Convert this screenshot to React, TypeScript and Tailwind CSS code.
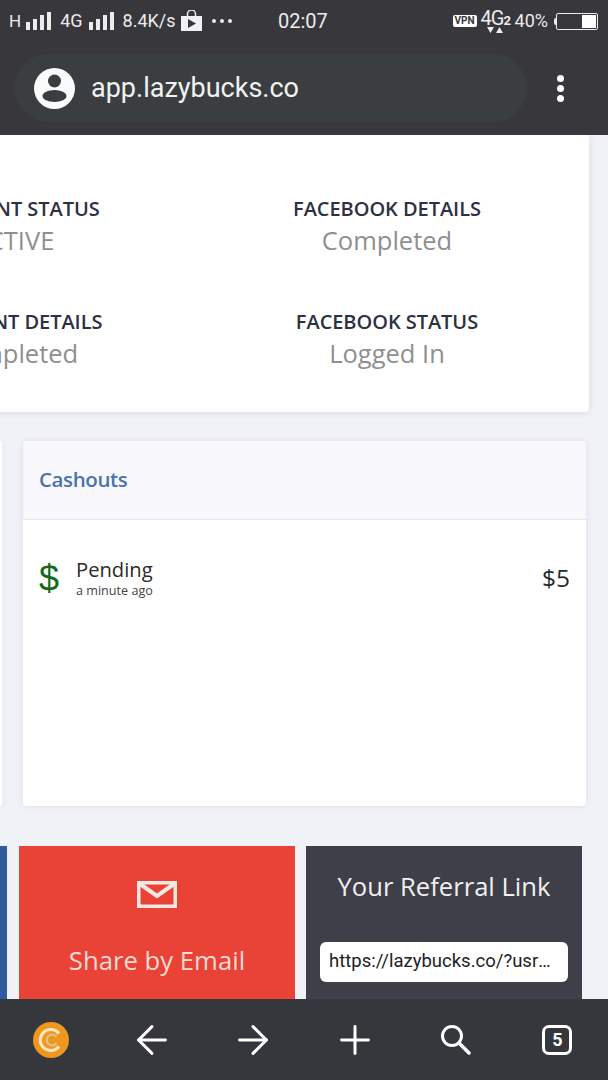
import React from 'react';
import { ArrowLeft, ArrowRight, Plus } from 'lucide-react';

const stats = [
  { label: 'ACCOUNT STATUS', value: 'ACTIVE' },
  { label: 'FACEBOOK DETAILS', value: 'Completed' },
  { label: 'ACCOUNT DETAILS', value: 'Completed' },
  { label: 'FACEBOOK STATUS', value: 'Logged In' },
];

const SignalBars = () => (
  <svg width="25" height="20" viewBox="0 0 25 20" fill="#ececec" className="shrink-0">
    <rect x="0" y="11" width="4" height="8" />
    <rect x="7" y="8" width="4" height="11" />
    <rect x="14" y="4" width="4" height="15" />
    <rect x="21" y="1" width="4" height="18" />
  </svg>
);

const StoreBag = () => (
  <svg width="21" height="22" viewBox="0 0 21 22" className="shrink-0">
    <path d="M6.5 6V4a4 4 0 0 1 8 0v2" fill="none" stroke="#ececec" strokeWidth="1.5" />
    <rect x="0" y="6" width="21" height="15" fill="#f2f2f2" />
    <path d="M7 9l8 4.5L7 18z" fill="#37373c" />
  </svg>
);

const StatusBar = () => (
  <div className="flex h-[42px] items-center pl-[9px] pr-[10px] text-[#ececec] font-['Roboto',sans-serif]">
    <div className="flex w-[269px] items-center">
      <span className="text-[17px] leading-none">H</span>
      <div className="ml-[5px]"><SignalBars /></div>
      <span className="ml-[9px] text-[18px] leading-none">4G</span>
      <div className="ml-[6px]"><SignalBars /></div>
      <span className="ml-[9px] text-[18px] leading-none">8.4K/s</span>
      <div className="ml-[5px]"><StoreBag /></div>
      <div className="ml-[10px] flex gap-[4px]">
        <span className="size-[4px] rounded-full bg-[#ececec]" />
        <span className="size-[4px] rounded-full bg-[#ececec]" />
        <span className="size-[4px] rounded-full bg-[#ececec]" />
      </div>
    </div>
    <span className="text-[20px] leading-none">02:07</span>
    <div className="ml-auto flex items-center">
      <span className="rounded-[2px] bg-white px-[2px] text-[10px] font-bold leading-[12px] text-[#37373c]">VPN</span>
      <div className="relative -mt-[6px] ml-[4px] w-[29px] leading-none">
        <span className="text-[20px] tracking-[-1px]">4G</span>
        <span className="text-[13px] font-bold">2</span>
        <svg width="16" height="7" viewBox="0 0 16 7" fill="#ececec" className="absolute left-[6px] top-[19px]">
          <path d="M0 0h7L3.5 6zM9 6l3.5-6L16 6z" />
        </svg>
      </div>
      <span className="ml-[5px] text-[18px] leading-none">40%</span>
      <div className="relative ml-[8px] flex h-[17px] w-[42px] justify-end rounded-[2px] border border-[#ececec] p-px">
        <span className="absolute -left-[3px] top-[4px] h-[7px] w-[2px] rounded-l-[2px] bg-[#ececec]" />
        <div className="w-[14px] bg-white" />
      </div>
    </div>
  </div>
);

const AddressBar = () => (
  <div className="flex h-[93px] items-start pl-[14px] pr-[39px] pt-[12px]">
    <div className="flex h-[68px] w-[513px] items-center rounded-full bg-[#3a3e41] pl-[20px]">
      <svg width="41" height="41" viewBox="0 0 41 41" className="shrink-0">
        <circle cx="20.5" cy="20.5" r="20.5" fill="#fbfbfb" />
        <circle cx="20.5" cy="13" r="6.5" fill="#3a3e41" />
        <ellipse cx="20.5" cy="28" rx="12" ry="6" fill="#3a3e41" />
      </svg>
      <span className="ml-[16px] font-['Roboto',sans-serif] text-[27px] leading-none text-[#f2f2f2]">app.lazybucks.co</span>
    </div>
    <div className="ml-[30px] mt-[21px] flex flex-col gap-[3px]">
      <span className="size-[7px] rounded-full bg-white" />
      <span className="size-[7px] rounded-full bg-white" />
      <span className="size-[7px] rounded-full bg-white" />
    </div>
  </div>
);

const StatsCard = () => (
  <div className="-ml-[189px] h-[277px] w-[778px] rounded-b-[4px] bg-white px-[15px] pt-[61px] shadow-[0_1px_6px_rgba(60,60,90,0.12)]">
    <div className="grid grid-cols-2 gap-y-[53px]">
      {stats.map((s) => (
        <div key={s.label} className="flex flex-col items-center">
          <span className="text-[20px] font-semibold leading-[26px] tracking-[-0.05px] text-[#2d3142]">{s.label}</span>
          <span className="mt-[2px] text-[25.5px] leading-[32px] text-[#8f8f8f]">{s.value}</span>
        </div>
      ))}
    </div>
  </div>
);

const CashoutsRow = () => (
  <div className="mt-[29px] flex h-[365px]">
    <div className="w-[2px] shrink-0 rounded-r-[4px] bg-white shadow-[0_0_6px_rgba(60,60,90,0.12)]" />
    <div className="ml-[21px] flex w-[563px] flex-col rounded-[4px] bg-white shadow-[0_0_6px_rgba(60,60,90,0.1)]">
      <div className="flex h-[79px] items-center rounded-t-[4px] border-b border-[#e6e7ec] bg-[#f8f8fc] pb-[2px] pl-[16px]">
        <span className="text-[20.5px] font-semibold tracking-[-0.4px] text-[#4b71b0]">Cashouts</span>
      </div>
      <div className="flex items-start px-[16px] pt-[36px]">
        <span className="mt-[1px] w-[37px] font-['Liberation_Sans',sans-serif] text-[36px] leading-[44px] text-[#14691b]">$</span>
        <div className="flex flex-col">
          <span className="text-[20.2px] leading-[26px] text-[#2a2a2a]">Pending</span>
          <span className="mt-[1px] text-[12.6px] leading-[16px] text-[#444]">a minute ago</span>
        </div>
        <span className="ml-auto mt-[6px] text-[24.5px] leading-[32px] text-[#2a2a2a]">$5</span>
      </div>
    </div>
  </div>
);

const ShareRow = () => (
  <div className="mt-[40px] flex h-[160px]">
    <div className="w-[7px] shrink-0 bg-[#2f5aa0]" />
    <div className="ml-[12px] flex w-[276px] flex-col items-center bg-[#e84336] pt-[35px]">
      <svg width="40" height="27" viewBox="0 0 40 27" className="shrink-0">
        <rect x="1.75" y="1.75" width="36.5" height="23.5" fill="none" stroke="#f8e8e4" strokeWidth="3.5" />
        <path d="M3 3l17 12L37 3" fill="none" stroke="#f8e8e4" strokeWidth="4" />
      </svg>
      <span className="mt-[36px] text-[25.7px] leading-[34px] text-[#f7d9d3]">Share by Email</span>
    </div>
    <div className="ml-[11px] flex w-[276px] flex-col items-center bg-[#3f3f49] pt-[24px]">
      <span className="text-[25.6px] leading-[34px] text-[#f0f0f0]">Your Referral Link</span>
      <div className="mt-[38px] flex h-[40px] w-[248px] items-center rounded-[6px] bg-white pl-[9px] pr-[8px] font-['Roboto',sans-serif] text-[18.5px] text-[#222]">
        <span className="truncate">https://lazybucks.co/?usr=48213</span>
      </div>
    </div>
  </div>
);

const BottomBar = () => (
  <div className="grid h-[81px] shrink-0 grid-cols-6 items-center justify-items-center bg-[#36373c] text-white">
    <svg width="36" height="36" viewBox="0 0 36 36">
      <circle cx="18" cy="18" r="18" fill="#f0971e" />
      <path d="M26 11.5a10.5 10.5 0 1 0 0 13" fill="none" stroke="#fbe6c0" strokeWidth="3" />
      <path d="M23.5 14.5a5.5 5.5 0 1 0 0 7" fill="none" stroke="#d9c49a" strokeWidth="2" />
    </svg>
    <ArrowLeft size={46} strokeWidth={1.55} />
    <ArrowRight size={46} strokeWidth={1.55} />
    <Plus size={46} strokeWidth={1.55} />
    <svg width="30" height="30" viewBox="0 0 30 30" fill="none" stroke="white">
      <circle cx="11" cy="11" r="9.5" strokeWidth="3" />
      <path d="M18 18l10 10" strokeWidth="3.5" strokeLinecap="round" />
    </svg>
    <div className="flex size-[30px] items-center justify-center rounded-[7px] border-[3px] border-white font-['Roboto',sans-serif] text-[18px] font-bold leading-none">5</div>
  </div>
);

export default function App() {
  return (
    <div className="flex h-[1080px] w-[608px] flex-col overflow-hidden bg-[#f1f2f7] font-['Open_Sans',sans-serif]">
      <div className="relative z-10 shrink-0 bg-[#37373c]">
        <StatusBar />
        <AddressBar />
      </div>
      <main className="min-h-0 flex-1 overflow-hidden">
        <StatsCard />
        <CashoutsRow />
        <ShareRow />
      </main>
      <BottomBar />
    </div>
  );
}
